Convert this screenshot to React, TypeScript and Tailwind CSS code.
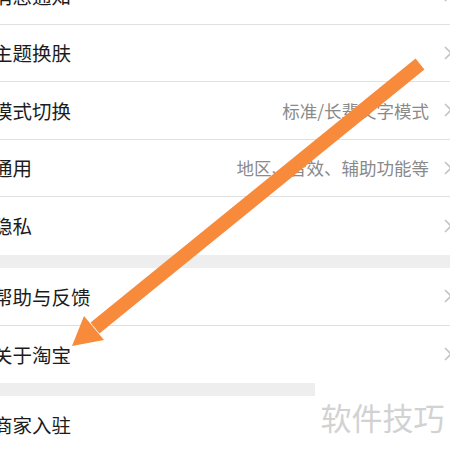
import React from "react";

const Chevron = () => (
  <svg width="10" height="16" viewBox="0 0 10 16" className="shrink-0">
    <path d="M2 2 L8 8 L2 14" fill="none" stroke="#c4c4c4" strokeWidth="1.6" />
  </svg>
);

function Row({ label, value, border = true }: { label: string; value?: string; border?: boolean }) {
  return (
    <div
      className={`h-[57.5px] box-border flex items-center bg-white ${border ? "border-b border-[#e0e0e0]" : ""}`}
    >
      <div className="ml-[-7px] text-[19.5px] text-[#1c1c1c] leading-none flex-1 whitespace-nowrap">{label}</div>
      {value && <div className="text-[17.5px] text-[#8a8a8a] leading-none whitespace-nowrap mr-[14px]">{value}</div>}
      <div className="w-[8px] overflow-visible mr-[-1px]">
        <Chevron />
      </div>
    </div>
  );
}

export default function App() {
  return (
    <div
      className="relative w-[450px] h-[450px] overflow-hidden bg-[#eeeeee]"
      style={{ fontFamily: '"Noto Sans CJK SC", "Noto Sans", sans-serif' }}
    >
      <div className="mt-[-33px] flex flex-col">
        <Row label="消息通知" />
        <Row label="主题换肤" />
        <Row label="模式切换" value="标准/长辈文字模式" />
        <Row label="通用" value="地区、音效、辅助功能等" />
        <Row label="隐私" border={false} />
        <div className="h-[13.5px]" />
        <Row label="帮助与反馈" />
        <Row label="关于淘宝" border={false} />
        <div className="h-[13px]" />
        <Row label="商家入驻" border={false} />
      </div>

      <div className="absolute left-[315px] top-[382px] w-[135px] h-[68px] bg-white flex items-center justify-center">
        <span className="text-[31px] text-[#d2d2d2] leading-none mt-[1px] tracking-[0px]">软件技巧</span>
      </div>

      <svg className="absolute left-0 top-0" width="450" height="450" viewBox="0 0 450 450">
        <line x1="420" y1="64" x2="95" y2="328" stroke="#f78a3b" strokeWidth="14" strokeLinecap="butt" />
        <polygon points="72,346 84,316 104,340" fill="#f78a3b" />
      </svg>
    </div>
  );
}
